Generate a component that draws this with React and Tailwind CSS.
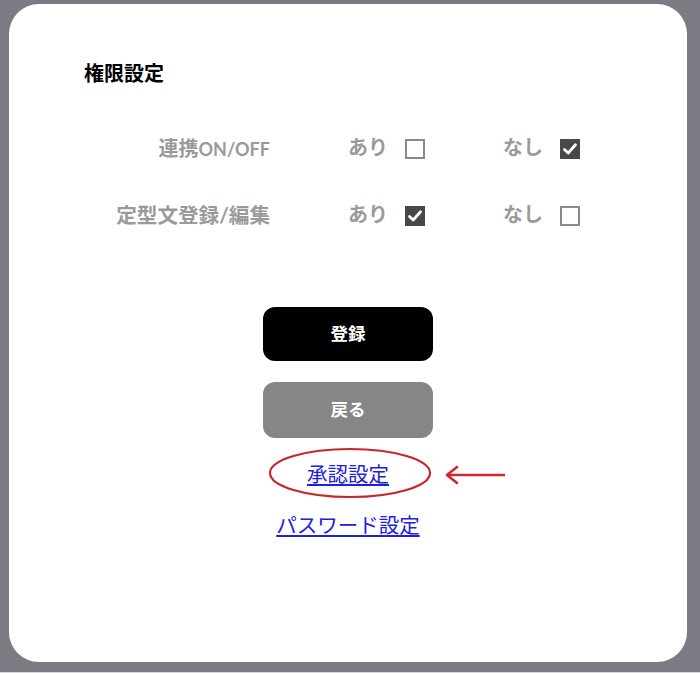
import React from 'react';

const FONT = { fontFamily: 'Lato, "Noto Sans CJK JP", sans-serif' };
const LINK_FONT = { fontFamily: '"Noto Sans CJK JP", sans-serif' };

function Box({ checked }) {
  if (!checked) {
    return <span className="inline-block w-[20px] h-[20px] border-2 border-[#8a8a8a] bg-white" />;
  }
  return (
    <span className="inline-flex items-center justify-center w-[20px] h-[20px] bg-[#484848]">
      <svg width="16" height="16" viewBox="0 0 16 16">
        <path d="M2.5 8.5 L6.2 12 L13.5 3.8" fill="none" stroke="#fff" strokeWidth="2.8" strokeLinecap="round" strokeLinejoin="round" />
      </svg>
    </span>
  );
}

function Row({ label, yes, className }) {
  return (
    <div className={`flex items-center h-[28px] text-[20px] font-bold text-[#9a9a9a] ${className}`}>
      <span className="w-[261px] text-right -translate-y-[1px]">{label}</span>
      <span className="ml-[78px] w-[40px] -translate-y-[2px]">あり</span>
      <span className="ml-[17px] flex"><Box checked={yes} /></span>
      <span className="ml-[78px] w-[40px] -translate-y-[2px]">なし</span>
      <span className="ml-[17px] flex"><Box checked={!yes} /></span>
    </div>
  );
}

export default function App() {
  return (
    <div className="w-[700px] h-[673px] bg-[#7c7b84] pt-[4px] pl-[9px] relative overflow-hidden" style={FONT}>
      <div className="absolute left-0 bottom-0 w-full h-[1px] bg-[#d8d8dc]" />
      <div className="w-[678px] h-[658px] bg-white rounded-[30px] flex flex-col pt-[55px]">
        {/* Title */}
        <h2 className="pl-[75px] text-[20px] leading-[28px] font-bold text-black">権限設定</h2>

        {/* Permission rows */}
        <Row label={<>連携<span className="text-[18px]">ON/OFF</span></>} yes={false} className="mt-[48px]" />
        <Row label={<span className="text-[20.6px]">定型文登録/編集</span>} yes={true} className="mt-[39px]" />

        {/* Buttons */}
        <div className="flex flex-col items-center mt-[77px]">
          <button className="w-[170px] h-[54px] rounded-[12px] bg-black text-white text-[17.5px] font-bold">登録</button>
          <button className="w-[170px] h-[56px] rounded-[12px] bg-[#868686] text-white text-[17.5px] font-bold mt-[21px]">戻る</button>

          <div className="relative mt-[20px] h-[30px] flex items-center">
            <a href="#" className="text-[20.5px] leading-[30px] text-[#2020e0] underline underline-offset-2" style={LINK_FONT}>承認設定</a>
            <svg className="absolute left-[-37px] top-[-10px] overflow-visible" width="240" height="52" viewBox="0 0 240 52">
              <ellipse cx="80" cy="25" rx="80" ry="24" fill="none" stroke="#c8262c" strokeWidth="2.2" />
              <path d="M177 27 H235" stroke="#d0282e" strokeWidth="2.4" />
              <path d="M187 19 L177 27 L187 35" fill="none" stroke="#d0282e" strokeWidth="2.6" strokeLinecap="round" strokeLinejoin="round" />
            </svg>
          </div>
          <a href="#" className="mt-[21px] text-[20.5px] leading-[30px] text-[#2020e0] underline underline-offset-2" style={LINK_FONT}>パスワード設定</a>
        </div>
      </div>
    </div>
  );
}
